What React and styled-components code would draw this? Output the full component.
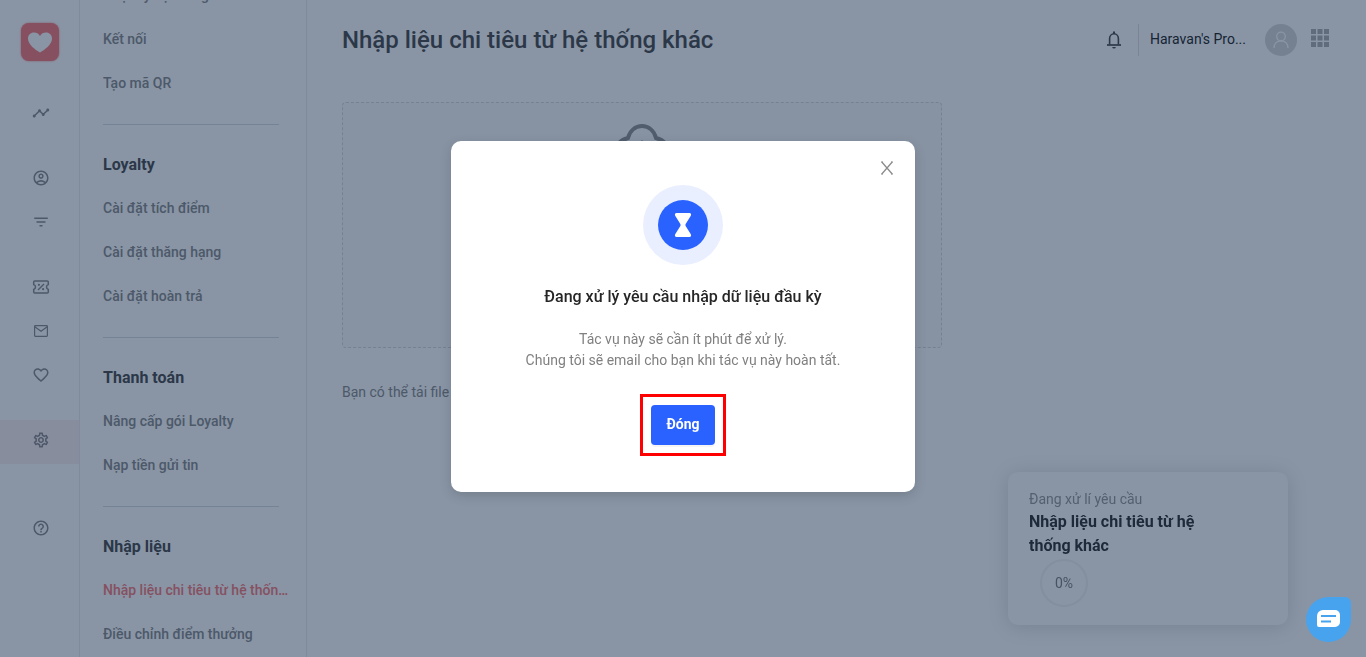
import React, { useState } from 'react';
import styled, { createGlobalStyle } from 'styled-components';
import {
  MdTimeline,
  MdOutlineAccountCircle,
  MdFilterList,
  MdFavoriteBorder,
  MdOutlineSettings,
  MdHelpOutline,
} from 'react-icons/md';

const TicketIcon = () => (
  <svg width="18" height="18" viewBox="0 0 18 18" fill="none" stroke="currentColor">
    <path
      d="M2.7 2.900h12.600c.6 0 1 .4 1 1v2.700a2.500 2.500 0 0 0 0 4.800v2.700c0 .6-.4 1-1 1H2.700c-.6 0-1-.4-1-1v-2.700a2.500 2.500 0 0 0 0-4.800V3.900c0-.6.4-1 1-1z"
      strokeWidth="1.500"
    />
    <path d="M6 12l6-6" strokeWidth="1.400" />
    <circle cx="6.900" cy="6.800" r="1.100" fill="currentColor" stroke="none" />
    <circle cx="11.100" cy="11.200" r="1.100" fill="currentColor" stroke="none" />
  </svg>
);

const MailIcon = () => (
  <svg width="18" height="18" viewBox="0 0 18 18" fill="none" stroke="currentColor" strokeWidth="1.200">
    <rect x="2.600" y="3.600" width="12.800" height="10.800" rx="0.800" />
    <path d="M2.800 4.800L9 9.200l6.200-4.400" />
  </svg>
);

const BellIcon = () => (
  <svg width="18" height="20" viewBox="0 0 18 20" fill="none" stroke="currentColor">
    <path d="M4.600 14.500V8.500a4.400 4.700 0 0 1 8.800 0v6" strokeWidth="1.600" />
    <path d="M2 15h14" strokeWidth="1.700" />
    <path d="M9 1.500v2.500" strokeWidth="2" />
    <path d="M7.200 17h3.600a1.800 1.600 0 0 1-3.600 0z" fill="currentColor" stroke="none" />
  </svg>
);

const CloudIcon = () => (
  <svg width="60" height="44" viewBox="0 0 60 44" fill="none" stroke="currentColor" strokeWidth="4">
    <path d="M18 38h-3C8 38 4 33 4 27c0-7 5-11 12-13C18 6.500 23.500 2 30 2s12 4.500 14 12c7 2 12 6 12 13 0 6-4 11-11 11h-3" />
    <path d="M30 17v26M22 26l8-8 8 8" strokeWidth="3" />
  </svg>
);

const CloseIcon = () => (
  <svg width="14" height="14" viewBox="0 0 14 14" fill="none" stroke="currentColor" strokeWidth="1.300">
    <path d="M1.800 1l10.400 12M12.200 1L1.800 13" />
    <path d="M1 1h2M11 1h2M1 13h2M11 13h2" strokeWidth="1" />
  </svg>
);

const railGroups = [
  [{ label: 'Tổng quan', icon: <MdTimeline /> }],
  [
    { label: 'Khách hàng', icon: <MdOutlineAccountCircle /> },
    { label: 'Phân nhóm', icon: <MdFilterList /> },
  ],
  [
    { label: 'Ưu đãi', icon: <TicketIcon /> },
    { label: 'Email', icon: <MailIcon /> },
    { label: 'Yêu thích', icon: <MdFavoriteBorder /> },
  ],
  [{ label: 'Cấu hình', icon: <MdOutlineSettings />, active: true }],
];

const menuSections = [
  { items: ['Nhật ký hệ thống', 'Kết nối', 'Tạo mã QR'] },
  {
    title: 'Loyalty',
    items: ['Cài đặt tích điểm', 'Cài đặt thăng hạng', 'Cài đặt hoàn trả'],
  },
  { title: 'Thanh toán', items: ['Nâng cấp gói Loyalty', 'Nạp tiền gửi tin'] },
  {
    title: 'Nhập liệu',
    items: ['Nhập liệu chi tiêu từ hệ thống khác', 'Điều chỉnh điểm thưởng'],
  },
];

const App = () => {
  const [open, setOpen] = useState(true);
  const [current, setCurrent] = useState('Nhập liệu chi tiêu từ hệ thống khác');

  return (
    <>
      <GlobalStyle />
      <Page>
        <Rail>
          <Logo href="#home" aria-label="Loyalty">
            <svg width="24" height="21" viewBox="0 0 24 21" fill="#fff">
              <path d="M12 20.500C7 17.500 0 12.500 0 6.500 0 3 2.600.500 6 .500c2.400 0 4.800 1.200 6 3.400C13.200 1.700 15.600.500 18 .500c3.400 0 6 2.500 6 6 0 6-7 11-12 14z" />
            </svg>
          </Logo>
          {railGroups.map((group, i) => (
            <RailGroup key={i}>
              {group.map(({ label, icon, active }) => (
                <RailLink key={label} href="#" aria-label={label} $active={active}>
                  {icon}
                </RailLink>
              ))}
            </RailGroup>
          ))}
          <RailHelp>
            <RailLink href="#" aria-label="Trợ giúp">
              <MdHelpOutline />
            </RailLink>
          </RailHelp>
        </Rail>

        <Menu>
          {menuSections.map(({ title, items }, i) => (
            <MenuSection key={i}>
              {title && <MenuTitle>{title}</MenuTitle>}
              {items.map((item) => (
                <MenuLink
                  key={item}
                  href="#"
                  $active={item === current}
                  onClick={() => setCurrent(item)}
                >
                  {item}
                </MenuLink>
              ))}
            </MenuSection>
          ))}
        </Menu>

        <Main>
          <Header>
            <h1>Nhập liệu chi tiêu từ hệ thống khác</h1>
            <Account>
              <IconButton aria-label="Thông báo">
                <BellIcon />
              </IconButton>
              <ShopName>Haravan's Pro...</ShopName>
              <Avatar aria-label="Tài khoản">
                <svg width="18" height="20" viewBox="0 0 18 20" fill="none" stroke="#fff" strokeWidth="1.300">
                  <circle cx="9" cy="6.500" r="4.300" />
                  <path d="M2 18c0-4.500 3-7.200 7-7.200s7 2.700 7 7.200" />
                </svg>
              </Avatar>
              <AppsButton aria-label="Ứng dụng">
                <svg width="18" height="18" viewBox="0 0 18 18" fill="currentColor">
                  {[0, 6.5, 13].map((y) =>
                    [0, 6.5, 13].map((x) => (
                      <rect key={`${x}-${y}`} x={x} y={y} width="5" height="5" />
                    ))
                  )}
                </svg>
              </AppsButton>
            </Account>
          </Header>
          <UploadBox>
            <CloudIcon />
            <p>Kéo thả file vào đây để tải lên</p>
          </UploadBox>
          <Hint>
            Bạn có thể tải file mẫu <a href="#">tại đây</a>
          </Hint>
        </Main>
      </Page>

      <ProgressCard>
        <span>Đang xử lí yêu cầu</span>
        <h3>Nhập liệu chi tiêu từ hệ thống khác</h3>
        <Ring>0%</Ring>
      </ProgressCard>

      {open && (
        <Mask>
          <Modal role="dialog" aria-modal="true" aria-labelledby="modal-title">
            <CloseButton aria-label="Đóng hộp thoại" onClick={() => setOpen(false)}>
              <CloseIcon />
            </CloseButton>
            <Badge>
              <svg width="50" height="50" viewBox="0 0 50 50">
                <circle cx="25" cy="25" r="25" fill="#2962ff" />
                <path
                  d="M18.500 13h13c1.500 0 2 1.500 1.300 2.700L27.500 24.200v1.600l5.300 8.500c.7 1.200.2 2.700-1.300 2.700h-13c-1.500 0-2-1.500-1.300-2.700l5.300-8.500v-1.600l-5.300-8.500C16.500 14.500 17 13 18.500 13z"
                  fill="#fff"
                />
              </svg>
            </Badge>
            <h2 id="modal-title">Đang xử lý yêu cầu nhập dữ liệu đầu kỳ</h2>
            <p>
              Tác vụ này sẽ cần ít phút để xử lý.
              <br />
              Chúng tôi sẽ email cho bạn khi tác vụ này hoàn tất.
            </p>
            <Highlight>
              <PrimaryButton onClick={() => setOpen(false)}>Đóng</PrimaryButton>
            </Highlight>
          </Modal>
        </Mask>
      )}

      <ChatButton aria-label="Chat">
        <svg width="24" height="18" viewBox="0 0 24 18">
          <path d="M6 0h12a5 5 0 0 1 5 5v7a5 5 0 0 1-5 5H2a2 2 0 0 1-2-2V6a6 6 0 0 1 6-6z" fill="#fff" />
          <path d="M4 6h15M4 11.500h10" stroke="#47a3ee" strokeWidth="2" />
        </svg>
      </ChatButton>
    </>
  );
};

const GlobalStyle = createGlobalStyle`
  * {
    box-sizing: border-box;
  }

  body {
    margin: 0;
    background: #fff;
    color: #4d4d4d;
    font-family: Roboto, 'Noto Sans', sans-serif;
    font-size: 14px;
    line-height: 21px;
  }

  h1, h2, h3, p {
    margin: 0;
  }

  a {
    color: inherit;
    text-decoration: none;
  }

  button {
    border: 0;
    padding: 0;
    background: none;
    color: inherit;
    font: inherit;
    cursor: pointer;
  }

  svg {
    display: block;
  }
`;

const Page = styled.div`
  display: flex;
  height: 100vh;
  overflow: hidden;
`;

const Rail = styled.nav`
  display: flex;
  flex-direction: column;
  flex: 0 0 80px;
  padding-top: 23px;
  border-right: 1px solid #ebebeb;
`;

const Logo = styled.a`
  display: flex;
  align-items: center;
  justify-content: center;
  align-self: center;
  width: 38px;
  height: 38px;
  margin-bottom: 11px;
  border-radius: 8px;
  background: #f97c7c;
  box-shadow: 0 0 2px #f97c7c;
`;

const RailGroup = styled.div`
  margin-top: 21px;
`;

const RailHelp = styled.div`
  margin-top: 44px;
`;

const RailLink = styled.a`
  display: flex;
  align-items: center;
  justify-content: center;
  height: 44px;
  padding: 0 0 4px 2px;
  background: ${({ $active }) => ($active ? '#fdf0f0' : 'none')};
  color: #8c8c8c;
  font-size: 18px;
`;

const Menu = styled.nav`
  display: flex;
  flex-direction: column;
  justify-content: flex-end;
  flex: 0 0 227px;
  padding: 0 14px 1px 23px;
  border-right: 1px solid #ebebeb;
  overflow: hidden;
`;

const MenuSection = styled.section`
  & + &::before {
    content: '';
    display: block;
    width: 176px;
    height: 1px;
    margin: 19px 0 28px;
    background: #d9dce4;
  }
`;

const MenuTitle = styled.h3`
  margin-bottom: 9px;
  font-size: 16px;
  font-weight: 700;
  line-height: 24px;
`;

const MenuLink = styled.a`
  display: block;
  overflow: hidden;
  color: ${({ $active }) => ($active ? '#f97c7c' : '#8c8c8c')};
  font-weight: 500;
  line-height: 44px;
  text-overflow: ellipsis;
  white-space: nowrap;
`;

const Main = styled.main`
  flex: 1;
  min-width: 0;
  padding: 22px 37px 0 35px;
`;

const Header = styled.header`
  display: flex;
  align-items: center;
  justify-content: space-between;
  height: 36px;
  margin-bottom: 44px;

  h1 {
    font-size: 24px;
    font-weight: 500;
    line-height: 36px;
  }
`;

const Account = styled.div`
  display: flex;
  align-items: center;
`;

const IconButton = styled.button`
  display: flex;
  margin-right: 15px;
`;

const ShopName = styled.span`
  width: 127px;
  height: 32px;
  padding-left: 11px;
  border-left: 1px solid #e0e0e0;
  color: #262626;
  line-height: 30px;
`;

const Avatar = styled.button`
  display: flex;
  align-items: center;
  justify-content: center;
  width: 32px;
  height: 32px;
  border-radius: 50%;
  background: #d9d9d9;
`;

const AppsButton = styled.button`
  margin-left: 14px;
  padding-bottom: 4px;
  color: #b0b0b0;
`;

const UploadBox = styled.div`
  display: flex;
  flex-direction: column;
  align-items: center;
  gap: 16px;
  max-width: 600px;
  height: 246px;
  margin-bottom: 34px;
  padding-top: 21px;
  border: 1px dashed #d9d9d9;
  border-radius: 4px;
  background: #fcfcfc;
  color: #949494;
`;

const Hint = styled.p`
  color: #8c8c8c;

  a {
    color: #2962ff;
  }
`;

const ProgressCard = styled.aside`
  position: fixed;
  right: 78px;
  bottom: 32px;
  width: 280px;
  height: 153px;
  padding: 17px 21px;
  border-radius: 10px;
  background: #fff;
  box-shadow: 0 2px 20px rgba(0, 0, 0, 0.15);

  span {
    color: #999;
  }

  h3 {
    max-width: 190px;
    color: #333;
    font-size: 16px;
    font-weight: 700;
    line-height: 24px;
  }
`;

const Ring = styled.div`
  display: flex;
  align-items: center;
  justify-content: center;
  width: 48px;
  height: 48px;
  margin: 1px 0 0 11px;
  border: 2px solid #f3f3f3;
  border-radius: 50%;
  color: #808080;
`;

const Mask = styled.div`
  position: fixed;
  inset: 0;
  display: flex;
  align-items: center;
  justify-content: center;
  padding-bottom: 24px;
  background: rgba(9, 33, 66, 0.48);
`;

const Modal = styled.div`
  position: relative;
  display: flex;
  flex-direction: column;
  align-items: center;
  width: 464px;
  padding: 44px 24px 36px;
  border-radius: 10px;
  background: #fff;
  box-shadow: 0 4px 12px rgba(0, 0, 0, 0.15);
  text-align: center;

  h2 {
    margin: 20px 0;
    color: #262626;
    font-size: 16px;
    font-weight: 500;
    line-height: 24px;
  }

  p {
    margin-bottom: 23px;
    color: #808080;
  }
`;

const CloseButton = styled.button`
  position: absolute;
  top: 20px;
  right: 21px;
  color: #8c8c8c;
`;

const Badge = styled.div`
  display: flex;
  align-items: center;
  justify-content: center;
  width: 80px;
  height: 80px;
  border-radius: 50%;
  background: #eaefff;
`;

const Highlight = styled.div`
  padding: 8px;
  border: 3px solid #f00;
`;

const PrimaryButton = styled.button`
  display: block;
  height: 40px;
  padding: 0 15px 2px;
  border-radius: 4px;
  background: #2962ff;
  box-shadow: 0 2px 0 rgba(0, 0, 0, 0.04);
  color: #fff;
  font-weight: 700;
`;

const ChatButton = styled.button`
  position: fixed;
  right: 15px;
  bottom: 15px;
  display: flex;
  align-items: center;
  justify-content: center;
  width: 45px;
  height: 45px;
  padding-bottom: 2px;
  border-radius: 50% 6px 50% 50%;
  background: #47a3ee;
`;

export default App;
